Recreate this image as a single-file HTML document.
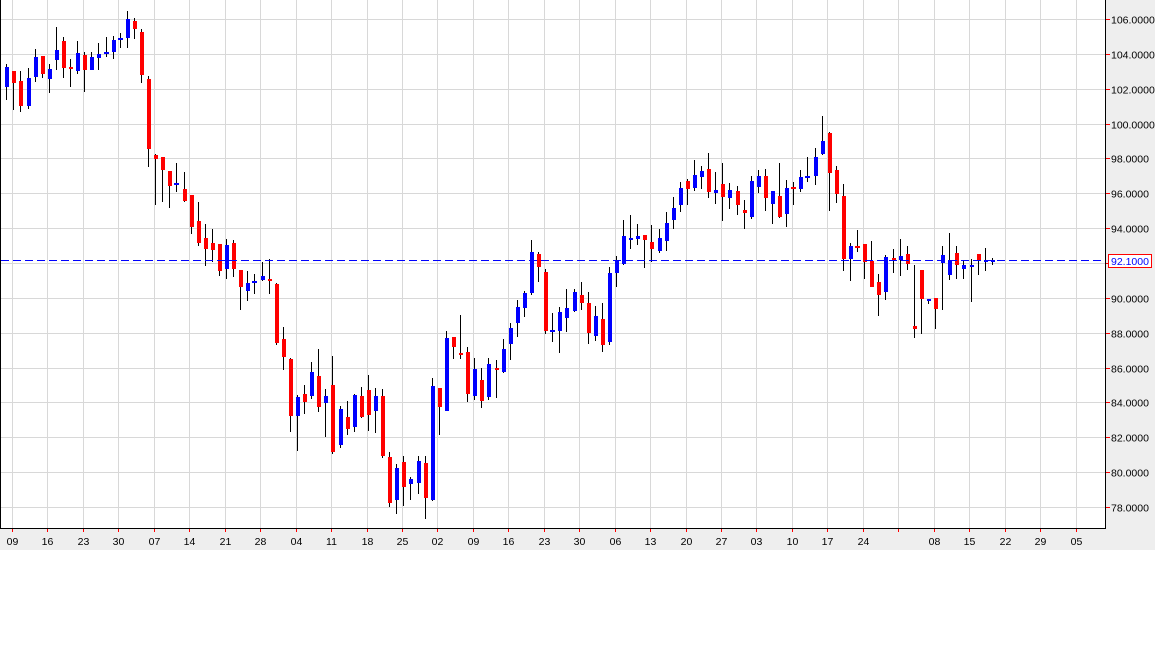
<!DOCTYPE html>
<html><head><meta charset="utf-8"><style>
html,body{margin:0;padding:0;background:#fff;}
svg{display:block;font-family:"Liberation Sans",sans-serif;}
</style></head><body>
<svg id="s" width="1155" height="648" xmlns="http://www.w3.org/2000/svg">
<rect x="0" y="0" width="1155" height="648" fill="#fff"/>
<rect x="1106" y="0" width="49" height="550" fill="#eeeeee"/>
<rect x="0" y="529" width="1155" height="21" fill="#eeeeee"/>
<g id="grid" shape-rendering="crispEdges"></g>
<g id="candles" shape-rendering="crispEdges"></g>
<g id="dash" shape-rendering="crispEdges" fill="#0000ff"></g>
<line x1="0.5" y1="0" x2="0.5" y2="529" stroke="#000" shape-rendering="crispEdges"/>
<line x1="1105.5" y1="0" x2="1105.5" y2="529" stroke="#000" shape-rendering="crispEdges"/>
<line x1="0" y1="528.5" x2="1106" y2="528.5" stroke="#000" shape-rendering="crispEdges"/>
<g id="axis" font-size="10.5"></g>
<rect x="1108.5" y="254.5" width="43" height="13" fill="#fff" stroke="#ff0000" shape-rendering="crispEdges"/>
<text x="1111" y="265" font-size="10.5" fill="#0000ff">92.1000</text>
</svg>
<script>
var NS="http://www.w3.org/2000/svg";
function el(p,t,a,txt){var e=document.createElementNS(NS,t);for(var k in a)e.setAttribute(k,a[k]);if(txt)e.textContent=txt;document.getElementById(p).appendChild(e);}
for(var p=78;p<=106;p+=2){var y=Math.round(19+(106-p)*17.43)+0.5;
el("grid","line",{x1:1,y1:y,x2:1105,y2:y,stroke:"#d8d8d8"});
el("axis","line",{x1:1106,y1:y,x2:1110,y2:y,stroke:"#ff0000","shape-rendering":"crispEdges"});
el("axis","text",{x:1111,y:y+4,fill:"#000"},p.toFixed(4));}
var labs=["09","16","23","30","07","14","21","28","04","11","18","25","02","09","16","23","30","06","13","20","27","03","10","17","24","","08","15","22","29","05"];
for(var i=0;i<31;i++){var x=Math.round(12+35.45*i)+0.5;
el("grid","line",{x1:x,y1:0,x2:x,y2:528,stroke:"#d8d8d8"});
el("axis","line",{x1:x,y1:529,x2:x,y2:532,stroke:"#ff0000","shape-rendering":"crispEdges"});
if(labs[i])el("axis","text",{x:x,y:545,"text-anchor":"middle",fill:"#000"},labs[i]);}
var D=[
"B",64,67,87,100,"R",71,71,83,110,"R",71,81,106,112,"B",68,78,106,109,"B",49,57,77,82,"R",56,56,74,78,"B",64,69,79,93,"B",27,50,60,70,"R",37,41,68,78,"R",59,67,69,87,
"B",41,53,71,74,"R",52,55,70,92,"B",52,57,70,70,"B",43,54,58,70,"B",37,52,53,57,"B",36,40,52,59,"B",33,38,38,48,"B",11,19,38,48,"R",18,21,29,39,"R",29,32,75,83,
"R",76,79,149,167,"R",154,155,159,205,"R",157,157,170,202,"R",171,171,186,208,"B",163,183,183,192,"R",172,189,201,202,"R",195,195,227,234,"R",202,221,243,246,"R",224,238,249,266,"R",229,243,250,262,
"R",244,244,271,276,"B",239,245,269,279,"R",240,243,269,277,"R",270,270,287,310,"B",271,283,291,301,"B",274,281,281,294,"B",262,276,280,281,"R",259,279,281,294,"R",283,284,343,345,"R",327,339,357,370,
"R",358,359,416,432,"B",395,397,416,451,"R",385,394,402,414,"B",362,372,396,399,"R",349,376,407,412,"B",389,396,403,437,"R",356,385,452,454,"B",406,409,445,448,"R",401,417,429,435,"B",394,395,427,432,
"R",387,396,417,418,"R",375,390,415,431,"B",388,396,411,433,"R",389,396,456,458,"R",452,457,503,507,"B",464,468,500,514,"R",456,462,487,506,"B",477,479,484,500,"B",456,461,483,494,"R",456,463,498,519,
"B",378,386,500,501,"R",388,388,407,435,"B",331,338,411,411,"R",337,337,347,359,"R",315,353,355,359,"R",347,352,394,402,"B",358,369,396,400,"R",368,380,401,408,"B",358,364,397,400,"R",360,368,370,398,
"B",339,349,372,373,"B",323,328,344,360,"B",300,307,323,337,"B",291,293,308,317,"B",240,252,293,295,"R",252,254,267,282,"R",269,272,331,334,"B",313,330,330,342,"B",307,312,331,353,"B",289,308,318,332,
"B",289,292,311,312,"R",282,295,303,310,"R",292,303,333,344,"B",306,316,336,341,"R",303,319,345,352,"B",267,273,342,345,"B",256,260,273,287,"B",220,236,264,265,"B",215,238,240,249,"B",224,236,239,245,
"R",235,235,240,268,"R",225,242,249,262,"B",229,238,251,253,"B",212,223,241,251,"B",197,208,220,229,"B",182,188,205,212,"R",179,181,189,205,"B",160,175,188,191,"B",166,171,177,189,"R",153,169,192,198,
"B",172,190,193,204,"R",163,184,197,221,"B",183,190,198,209,"R",186,191,205,215,"R",200,210,213,229,"B",176,181,217,219,"B",170,176,187,193,"R",169,176,198,211,"B",191,191,204,224,"R",163,196,217,218,
"B",180,188,214,227,"R",182,187,187,205,"B",170,177,189,192,"B",157,176,176,182,"B",148,157,176,185,"B",116,141,154,155,"R",132,133,173,211,"R",166,170,194,203,"R",184,196,259,271,"B",243,246,259,281,
"R",230,246,246,252,"R",244,244,262,279,"R",241,261,287,287,"R",274,282,295,316,"B",255,257,292,300,"R",249,258,260,273,"B",239,256,260,276,"R",246,254,264,270,"R",265,326,329,338,"R",270,270,299,334,
"B",299,299,301,304,"R",298,298,309,329,"B",246,255,263,310,"B",233,260,275,280,"R",246,253,265,279,"B",260,265,269,279,"B",259,265,267,302,"R",254,254,260,275,"B",248,260,262,271,"B",258,260,262,265];
for(var i=0;i<D.length/5;i++){var c=D[i*5]=="B"?"#0000ff":"#ff0000";var wt=D[i*5+1],bt=D[i*5+2],bb=D[i*5+3],wb=D[i*5+4];
var cx=Math.round(6.3+7.09*i);
el("candles","rect",{x:cx,y:wt,width:1,height:Math.max(1,wb-wt),fill:"#000"});
var h=bb-bt;if(h<2){el("candles","rect",{x:cx-2,y:bt,width:5,height:2,fill:c});}
else el("candles","rect",{x:cx-1,y:bt,width:4,height:h,fill:c});}
for(var x=1;x<1105;x+=12){el("dash","rect",{x:x,y:260,width:Math.min(8,1105-x),height:1});}
</script>
</body></html>
